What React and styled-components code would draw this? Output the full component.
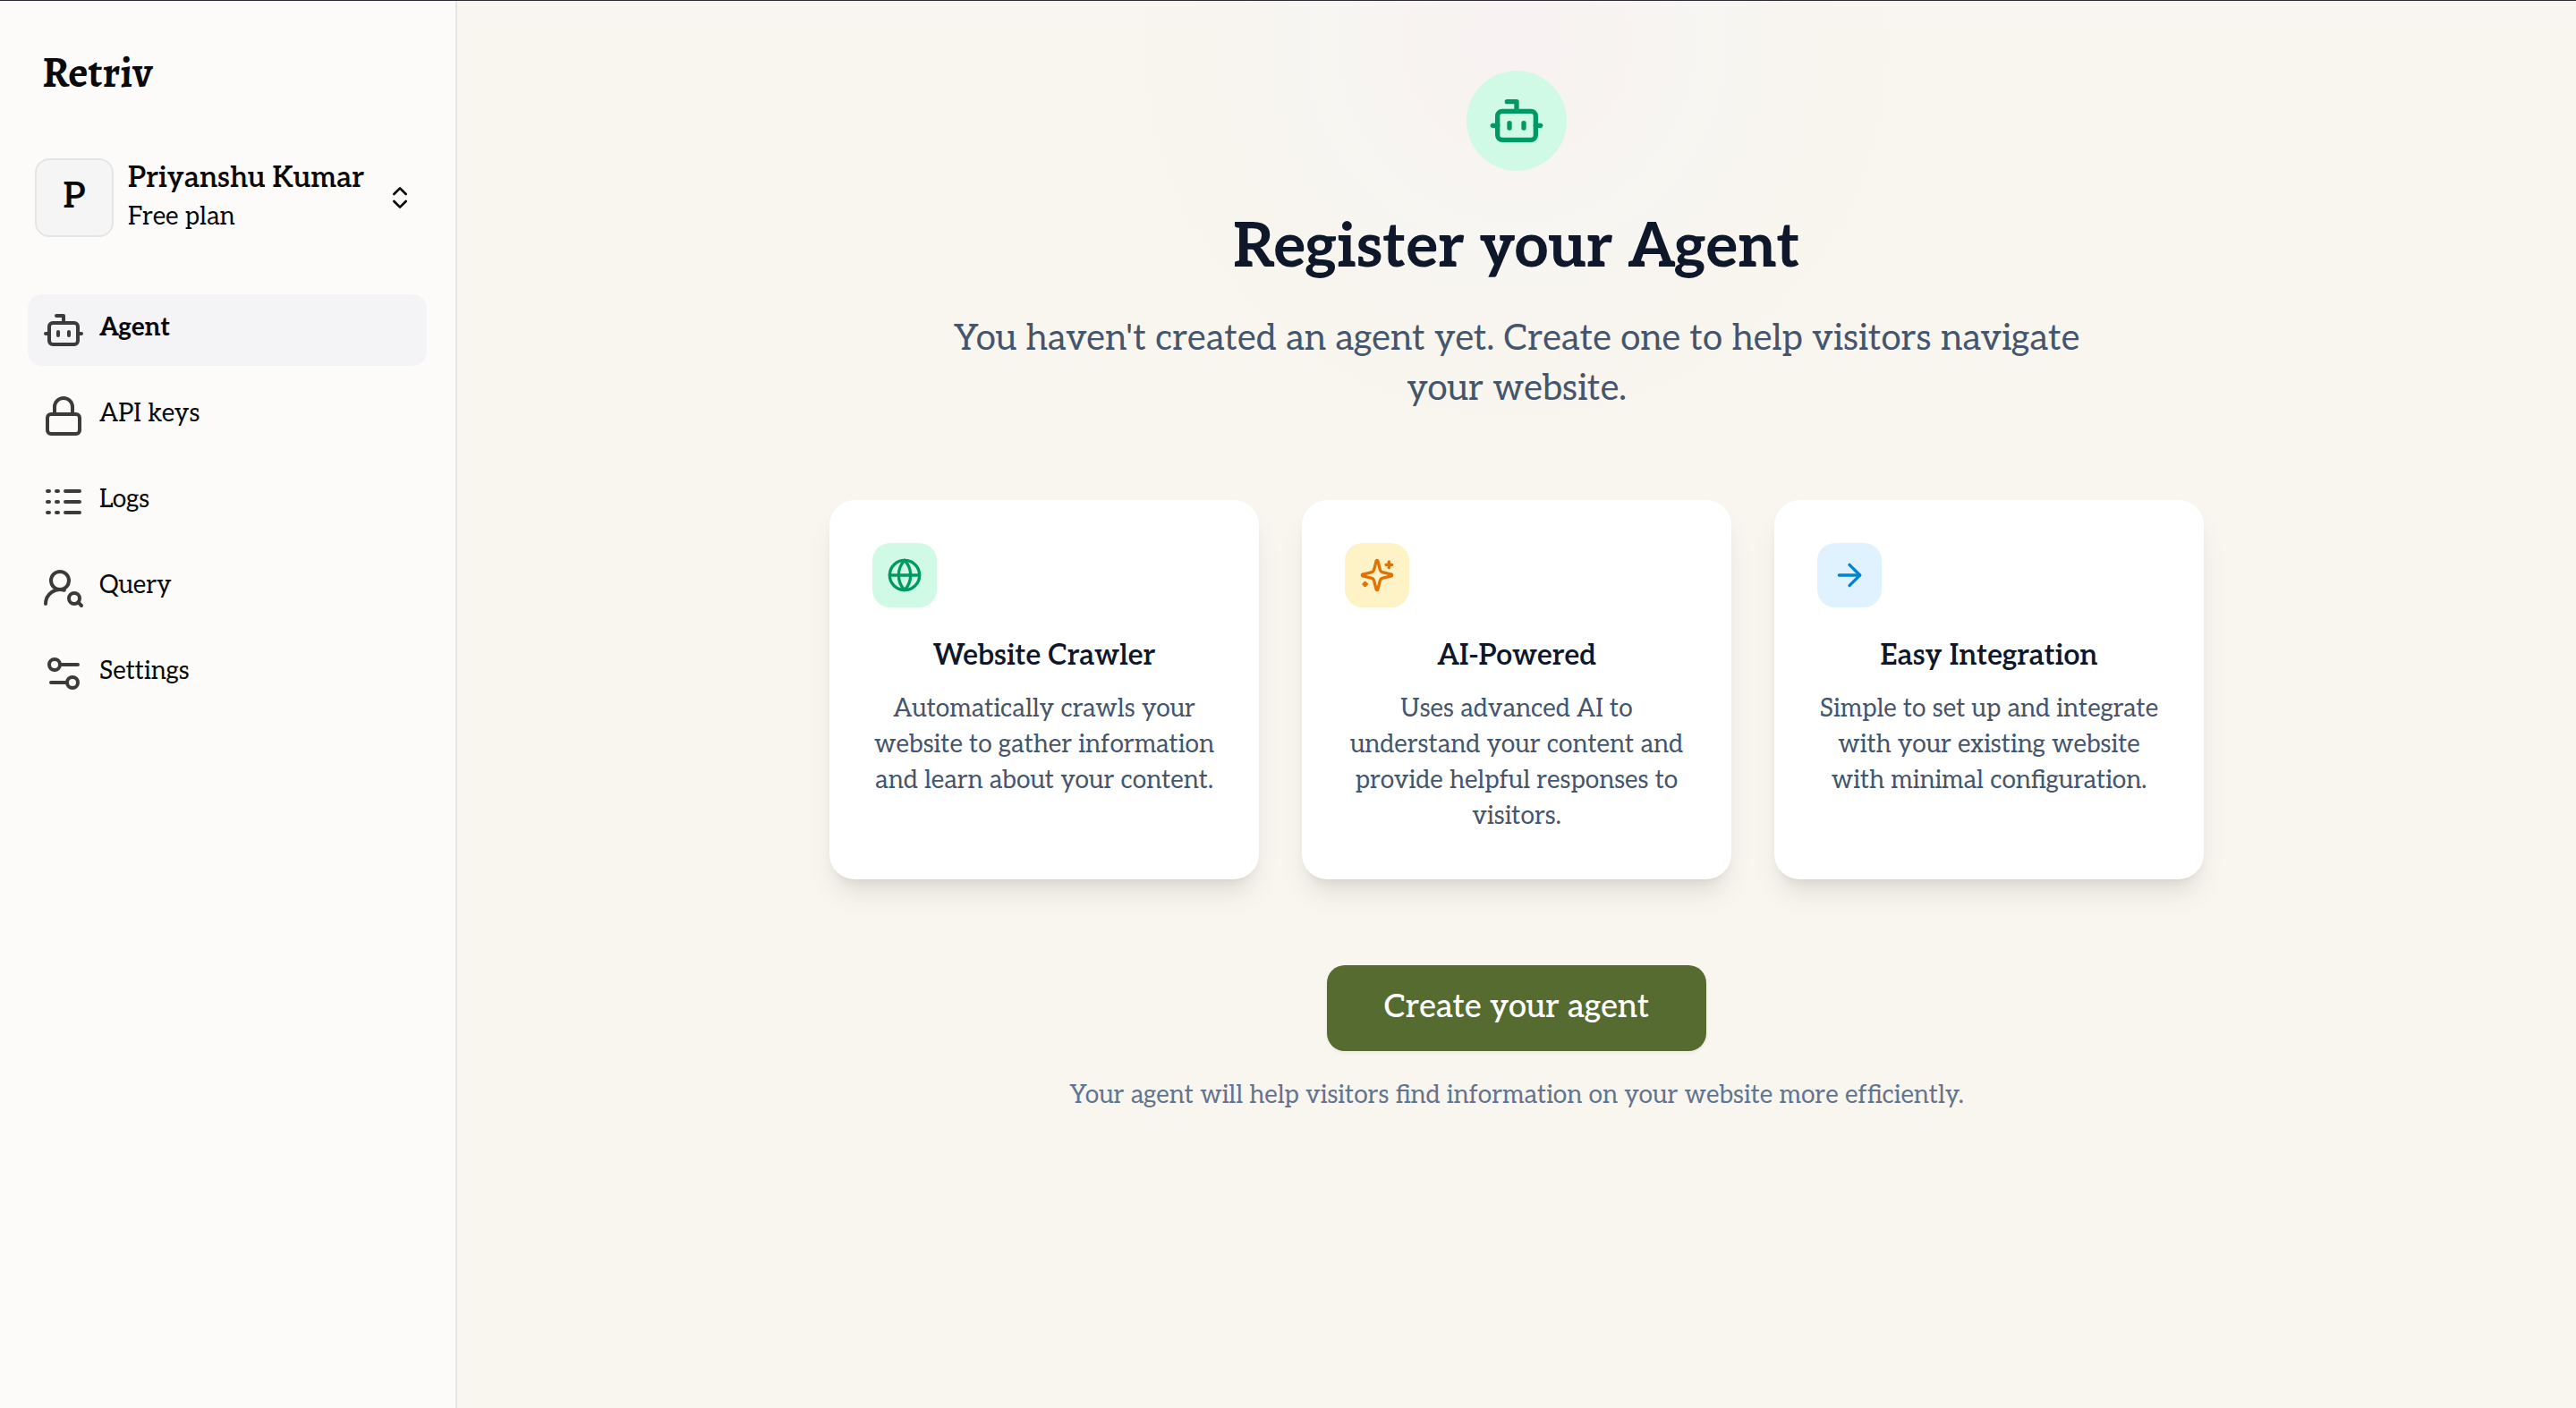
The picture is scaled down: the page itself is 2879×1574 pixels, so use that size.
import React from "react";
import styled, { createGlobalStyle } from "styled-components";
import { ArrowRight, Bot, ChevronsUpDown, Globe, Lock } from "lucide-react";

const GlobalStyle = createGlobalStyle`
  *, *::before, *::after { box-sizing: border-box; }
  body {
    margin: 0;
    font-family: Aleo, "DejaVu Serif Condensed", "DejaVu Serif", serif;
    font-size: 28px;
    line-height: 40px;
    color: #0a0a0a;
    background: #f9f6ef;
  }
  h1, h2, p, ul { margin: 0; padding: 0; }
  svg { display: block; flex-shrink: 0; }
`;

const Page = styled.div`
  display: flex;
  min-height: 100vh;
  border-top: 1px solid #2f2a33;
`;

const Sidebar = styled.aside`
  flex: 0 0 511px;
  padding: 46px 32px 32px 31px;
  background: #fcfbf9;
  border-right: 2px solid #e5e5e5;
`;

const Brand = styled.div`
  padding: 0 16px;
  font-family: Alegreya, "Liberation Serif", serif;
  font-size: 48px;
  font-weight: 600;
  line-height: 68px;
`;

const Account = styled.button`
  display: flex;
  align-items: center;
  gap: 16px;
  width: 100%;
  margin: 54px 0 56px;
  padding: 6px 14px 6px 8px;
  border: 0;
  background: none;
  font: inherit;
  color: inherit;
  text-align: left;
  cursor: pointer;
`;

const Avatar = styled.span`
  display: grid;
  place-items: center;
  width: 88px;
  height: 88px;
  padding-bottom: 2px;
  border: 2px solid #e5e5e5;
  border-radius: 16px;
  background: #f5f5f5;
  font-size: 40px;
  font-weight: 600;
`;

const AccountText = styled.span`
  display: grid;
  flex: 1;
  padding-bottom: 4px;
  white-space: nowrap;
`;

const AccountName = styled.span`
  font-size: 32px;
  font-weight: 600;
  line-height: 48px;
`;

const Nav = styled.ul`
  display: grid;
  gap: 16px;
  list-style: none;
`;

const NavLink = styled.a`
  display: flex;
  align-items: center;
  gap: 16px;
  height: 80px;
  padding: 0 16px;
  border-radius: 16px;
  background: ${(p) => (p.$active ? "#f4f4f7" : "transparent")};
  font-weight: ${(p) => (p.$active ? 700 : 400)};
  color: inherit;
  text-decoration: none;

  svg { color: #3b3b3b; }
`;

const NavLabel = styled.span`
  padding-bottom: 4px;
`;

const Main = styled.main`
  display: flex;
  flex: 1;
  flex-direction: column;
  align-items: center;
  padding: 78px 48px;
  text-align: center;
  background: radial-gradient(circle at 50% 48px, #f7f2f2 0, #f8f4f1 140px, #f7f6f2 210px, #f8f5f0 290px, #f9f6ef 470px);
`;

const HeroBadge = styled.div`
  display: grid;
  place-items: center;
  width: 112px;
  height: 112px;
  border-radius: 50%;
  background: #d0fae5;
  color: #009966;
`;

const Title = styled.h1`
  margin-top: 46px;
  font-size: 68px;
  font-weight: 700;
  line-height: 80px;
  color: #0f172b;
`;

const Lead = styled.p`
  max-width: 1344px;
  margin-top: 34px;
  font-size: 40px;
  line-height: 56px;
  color: #45556c;
`;

const Cards = styled.section`
  display: grid;
  grid-template-columns: repeat(3, 1fr);
  gap: 48px;
  width: 100%;
  max-width: 1536px;
  margin: 96px 0;
`;

const Card = styled.article`
  padding: 48px 48px 50px;
  border-radius: 28px;
  background: #fff;
  box-shadow: 0 20px 30px -6px rgba(0, 0, 0, 0.1), 0 8px 12px -8px rgba(0, 0, 0, 0.1);
`;

const CardIcon = styled.div`
  display: grid;
  place-items: center;
  width: 72px;
  height: 72px;
  border-radius: 20px;
  background: ${(p) => p.$background};
  color: ${(p) => p.$color};
`;

const CardTitle = styled.h2`
  margin: 30px 0 16px;
  font-size: 32px;
  font-weight: 600;
  line-height: 48px;
  color: #0f172b;
`;

const CardText = styled.p`
  color: #45556c;
`;

const CreateButton = styled.button`
  height: 96px;
  padding: 0 64px 2px;
  border: 0;
  border-radius: 20px;
  background: #556b2f;
  box-shadow: 0 2px 4px rgba(0, 0, 0, 0.05);
  font: inherit;
  font-size: 36px;
  font-weight: 500;
  color: #fff;
  cursor: pointer;
`;

const Note = styled.p`
  margin-top: 30px;
  color: #62748e;
`;

function StrokeIcon({ size, children }) {
  return (
    <svg
      width={size}
      height={size}
      viewBox="0 0 24 24"
      fill="none"
      stroke="currentColor"
      strokeWidth="2"
      strokeLinecap="round"
      strokeLinejoin="round"
      aria-hidden="true"
    >
      {children}
    </svg>
  );
}

const LogsIcon = ({ size }) => (
  <StrokeIcon size={size}>
    <path d="M13 6h8M13 12h8M13 18h8M3 6h1M3 12h1M3 18h1M8 6h1M8 12h1M8 18h1" />
  </StrokeIcon>
);

const QueryIcon = ({ size }) => (
  <StrokeIcon size={size}>
    <circle cx="10" cy="8" r="5" />
    <path d="M2 21a8 8 0 0 1 10.434-7.62" />
    <circle cx="18" cy="18" r="3" />
    <path d="m22 22-1.9-1.9" />
  </StrokeIcon>
);

const SettingsIcon = ({ size }) => (
  <StrokeIcon size={size}>
    <path d="M20 7h-9M14 17H5" />
    <circle cx="17" cy="17" r="3" />
    <circle cx="7" cy="7" r="3" />
  </StrokeIcon>
);

const SparklesIcon = ({ size }) => (
  <StrokeIcon size={size}>
    <path d="M9.937 15.5A2 2 0 0 0 8.5 14.063l-6.135-1.582a.5.5 0 0 1 0-.962L8.5 9.936A2 2 0 0 0 9.937 8.5l1.582-6.135a.5.5 0 0 1 .963 0L14.063 8.5A2 2 0 0 0 15.5 9.937l6.135 1.581a.5.5 0 0 1 0 .964L15.5 14.063a2 2 0 0 0-1.437 1.437l-1.582 6.135a.5.5 0 0 1-.963 0z" />
    <path d="M20 3v4M22 5h-4M4 17v2M5 18H3" />
  </StrokeIcon>
);

const links = [
  { label: "Agent", icon: Bot, active: true },
  { label: "API keys", icon: Lock },
  { label: "Logs", icon: LogsIcon },
  { label: "Query", icon: QueryIcon },
  { label: "Settings", icon: SettingsIcon },
];

const features = [
  {
    title: "Website Crawler",
    text: "Automatically crawls your website to gather information and learn about your content.",
    icon: Globe,
    color: "#009966",
    background: "#d0fae5",
  },
  {
    title: "AI-Powered",
    text: "Uses advanced AI to understand your content and provide helpful responses to visitors.",
    icon: SparklesIcon,
    color: "#e17100",
    background: "#fef3c6",
  },
  {
    title: "Easy Integration",
    text: "Simple to set up and integrate with your existing website with minimal configuration.",
    icon: ArrowRight,
    color: "#0084d1",
    background: "#dff2fe",
  },
];

export default function App() {
  return (
    <>
      <GlobalStyle />
      <Page>
        <Sidebar>
          <Brand>Retriv</Brand>
          <Account type="button">
            <Avatar>P</Avatar>
            <AccountText>
              <AccountName>Priyanshu Kumar</AccountName>
              <span>Free plan</span>
            </AccountText>
            <ChevronsUpDown size={32} />
          </Account>
          <nav>
            <Nav>
              {links.map(({ label, icon: Icon, active }) => (
                <li key={label}>
                  <NavLink href="#" $active={active} aria-current={active ? "page" : undefined}>
                    <Icon size={48} />
                    <NavLabel>{label}</NavLabel>
                  </NavLink>
                </li>
              ))}
            </Nav>
          </nav>
        </Sidebar>
        <Main>
          <HeroBadge>
            <Bot size={64} />
          </HeroBadge>
          <Title>Register your Agent</Title>
          <Lead>You haven't created an agent yet. Create one to help visitors navigate your website.</Lead>
          <Cards>
            {features.map(({ title, text, icon: Icon, color, background }) => (
              <Card key={title}>
                <CardIcon $color={color} $background={background}>
                  <Icon size={40} />
                </CardIcon>
                <CardTitle>{title}</CardTitle>
                <CardText>{text}</CardText>
              </Card>
            ))}
          </Cards>
          <CreateButton type="button">Create your agent</CreateButton>
          <Note>Your agent will help visitors find information on your website more efficiently.</Note>
        </Main>
      </Page>
    </>
  );
}
